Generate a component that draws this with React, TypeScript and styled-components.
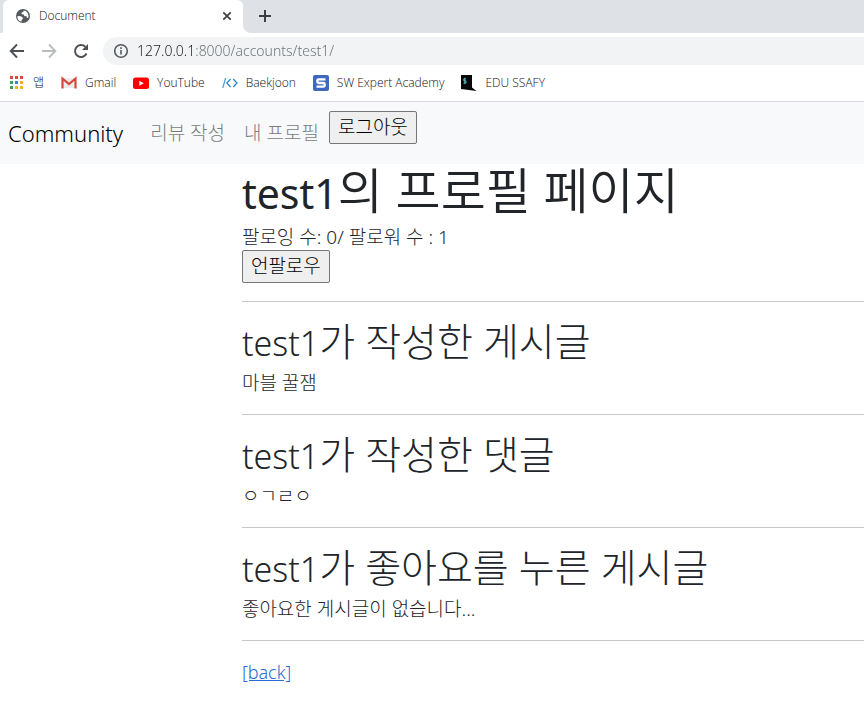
import React from "react";
import styled, { createGlobalStyle } from "styled-components";

const GlobalStyle = createGlobalStyle`
  * { box-sizing: border-box; }
  body {
    margin: 0;
    background: #fff;
    color: #212529;
    font-family: "Noto Sans", "Noto Sans CJK KR", sans-serif;
    font-weight: 300;
    font-size: 19px;
    line-height: 26px;
  }
  button { font: inherit; }
`;

/* ---------- browser frame ---------- */

const Browser = styled.header`
  border-bottom: 1px solid #d5d7da;
  font-family: "Open Sans", "Noto Sans CJK KR", sans-serif;
  font-weight: 300;
  font-size: 12px;
  line-height: 16px;
  color: #101214;
`;

const TabStrip = styled.div`
  display: flex;
  height: 33px;
  padding-left: 3px;
  background: #dee1e6;
`;

const Tab = styled.div`
  display: flex;
  align-items: center;
  gap: 8px;
  flex: 0 1 240px;
  padding: 0 8px 2px 12px;
  border-radius: 6px 6px 0 0;
  background: #fff;
`;

const TabTitle = styled.span`
  flex: 1;
`;

const IconButton = styled.button`
  display: flex;
  align-items: center;
  justify-content: center;
  width: 16px;
  height: 16px;
  padding: 0;
  border: 0;
  background: none;
`;

const StripRest = styled.div`
  flex: 1;
  background: #fff;
`;

const StripFill = styled.div`
  display: flex;
  align-items: center;
  height: 100%;
  padding: 0 0 2px 14px;
  border-bottom-left-radius: 8px;
  background: #dee1e6;
`;

const Toolbar = styled.div`
  display: flex;
  align-items: center;
  gap: 16px;
  height: 36px;
  padding-left: 9px;
`;

const AddressBar = styled.label`
  display: flex;
  align-items: center;
  gap: 8px;
  flex: 1;
  height: 28px;
  margin-left: -2px;
  padding-left: 10px;
  border-radius: 14px 0 0 14px;
  background: #f1f3f4;
`;

const AddressInput = styled.input`
  flex: 1;
  min-width: 0;
  padding: 0;
  border: 0;
  outline: 0;
  background: linear-gradient(to right, #202124 58px, #6b6f73 58px);
  -webkit-background-clip: text;
  background-clip: text;
  color: transparent;
  font-family: "Noto Sans", sans-serif;
  font-weight: 300;
  font-size: 14px;
  line-height: 20px;
`;

const Bookmarks = styled.nav`
  display: flex;
  align-items: center;
  gap: 17px;
  height: 32px;
  padding: 0 0 4px 9px;
`;

const Bookmark = styled.a`
  display: flex;
  align-items: center;
  gap: 8px;
  color: inherit;
  text-decoration: none;
  white-space: nowrap;
`;

/* ---------- site ---------- */

const Navbar = styled.nav`
  display: flex;
  align-items: center;
  padding: 9px 8px;
  background: #f8f9fa;
`;

const Brand = styled.a`
  margin-right: 18px;
  color: #000;
  font-size: 22px;
  font-weight: 300;
  text-decoration: none;
`;

const NavItems = styled.div`
  display: flex;
  align-items: flex-start;
`;

const NavLink = styled.a`
  padding: 9px 10px 9px 9px;
  color: #7b7d80;
  text-decoration: none;
`;

const Button = styled.button`
  padding: 3px 8px;
  border: 1px solid #767676;
  border-radius: 2px;
  background: #efefef;
  color: #000;
  line-height: 25px;
`;

const Profile = styled.main`
  padding-left: 28%;
`;

const Title = styled.h1`
  margin: 0 0 8px;
  font-size: 49px;
  font-weight: 350;
  line-height: 52px;
`;

const SectionTitle = styled.h2`
  margin: 0 0 8px;
  font-size: 39px;
  font-weight: 300;
  line-height: 42px;
`;

const UserName = styled.span<{ $size: number; $weight: number }>`
  font-size: ${(p) => p.$size}px;
  font-weight: ${(p) => p.$weight};
  line-height: 1;
`;

const Text = styled.p`
  margin: 0;
`;

const Rule = styled.hr`
  height: 1px;
  margin: 18px 0;
  border: 0;
  background: #c8c9ca;
`;

const BackLink = styled.a`
  color: #2a6bd4;
  font-size: 18px;
`;

/* ---------- icons ---------- */

const Globe = () => (
  <svg width="16" height="16" viewBox="0 0 16 16">
    <circle cx="8" cy="8" r="7" fill="#55595e" />
    <path d="M2.300 8.200 5 8l2.600 1.200.3 1.800-1.400.9.1 1.900C3.800 13.200 2.300 11 2.300 8.200ZM8.700 2.400 8.300 4 6.500 4.600 6.700 6.300 8.800 6.500 9.400 8.200 11.300 8 12 10l1.300-.4c.9-3.400-1.100-6.700-4.600-7.200Z" fill="#fff" />
  </svg>
);

const Close = () => (
  <svg width="10" height="10" viewBox="0 0 10 10" stroke="#3c4043" strokeWidth="1.7">
    <path d="m1.300 1.300 7.400 7.400m0-7.400L1.300 8.700" />
  </svg>
);

const Plus = () => (
  <svg width="14" height="14" viewBox="0 0 14 14" stroke="#3c4043" strokeWidth="2">
    <path d="M7 1v12M1 7h12" />
  </svg>
);

const Arrow = ({ forward = false }: { forward?: boolean }) => (
  <svg width="16" height="16" viewBox="0 0 16 16" fill="none" stroke={forward ? "#b9bbbe" : "#4d5156"} strokeWidth="1.9">
    <path d={forward ? "M1 8h13M8 1.500 14.300 8 8 14.500" : "M15 8H2M8 1.500 1.700 8 8 14.500"} />
  </svg>
);

const Reload = () => (
  <svg width="16" height="16" viewBox="0 0 16 16">
    <path d="M13.500 10.500A6 6 0 1 1 12.300 3.800" fill="none" stroke="#4d5156" strokeWidth="2" />
    <path d="M15 1v6H9Z" fill="#4d5156" />
  </svg>
);

const Info = () => (
  <svg width="16" height="16" viewBox="0 0 16 16" fill="none" stroke="#55595e" strokeWidth="1.6">
    <circle cx="8" cy="8" r="6.300" />
    <path d="M8 7v4.500M8 4.300v1.700" />
  </svg>
);

const gridColors = ["#d9493c", "#d9493c", "#d9493c", "#3f9d58", "#3c7fe0", "#e9b22e", "#3f9d58", "#e9b22e", "#e9b22e"];

const AppsGrid = () => (
  <svg width="16" height="16" viewBox="0 0 16 16">
    {gridColors.map((color, i) => (
      <rect key={i} x={1 + (i % 3) * 5} y={1 + Math.floor(i / 3) * 5} width="3" height="3" fill={color} />
    ))}
  </svg>
);

const GmailLogo = () => (
  <svg width="16" height="16" viewBox="0 0 16 16">
    <path d="M2 3h12v10H2Z" fill="#eceaea" />
    <path d="M1.500 13.500V3.500L8 9l6.500-5.500v10" fill="none" stroke="#d5483d" strokeWidth="2.200" />
  </svg>
);

const YouTubeLogo = () => (
  <svg width="16" height="16" viewBox="0 0 16 16">
    <rect x="0" y="2.500" width="16" height="11.500" rx="2.500" fill="#f00" />
    <path d="m6.300 5.700 4.500 2.500-4.500 2.500Z" fill="#fff" />
  </svg>
);

const BaekjoonLogo = () => (
  <svg width="16" height="16" viewBox="0 0 16 16" fill="none" strokeWidth="1.200">
    <path d="M3.600 3 .8 13" stroke="#4d9ad0" />
    <path d="M8.600 4 4.800 8l3.800 4M11.300 4 15 8l-3.700 4" stroke="#2584c6" />
  </svg>
);

const SwExpertLogo = () => (
  <svg width="16" height="16" viewBox="0 0 16 16">
    <rect width="16" height="16" rx="2" fill="#3d68bd" />
    <path d="M12.500 4.300H5.800Q4.300 4.300 4.300 6.100T5.800 8h4.400q1.500 0 1.500 1.900t-1.500 1.800H3.500" fill="none" stroke="#fff" strokeWidth="2.300" />
  </svg>
);

const SsafyLogo = () => (
  <svg width="16" height="16" viewBox="0 0 16 16">
    <path d="M0 0h11v12.500L15.500 16 0 14Z" fill="#050708" />
    <path d="M5 3.800H2.800v2H5v2.200H2.500M3.800 2.800v6.200" fill="none" stroke="#65c3d2" strokeWidth=".9" />
  </svg>
);

const bookmarks = [
  { label: "앱", icon: <AppsGrid /> },
  { label: "Gmail", icon: <GmailLogo /> },
  { label: "YouTube", icon: <YouTubeLogo /> },
  { label: "Baekjoon", icon: <BaekjoonLogo /> },
  { label: "SW Expert Academy", icon: <SwExpertLogo /> },
  { label: "EDU SSAFY", icon: <SsafyLogo /> },
];

const sections = [
  { title: "가 작성한 게시글", body: "마블 꿀잼" },
  { title: "가 작성한 댓글", body: "ㅇㄱㄹㅇ" },
  { title: "가 좋아요를 누른 게시글", body: "좋아요한 게시글이 없습니다..." },
];

export default function App() {
  return (
    <>
      <GlobalStyle />
      <Browser>
        <TabStrip>
          <Tab>
            <Globe />
            <TabTitle>Document</TabTitle>
            <IconButton aria-label="Close tab"><Close /></IconButton>
          </Tab>
          <StripRest>
            <StripFill>
              <IconButton aria-label="New tab"><Plus /></IconButton>
            </StripFill>
          </StripRest>
        </TabStrip>
        <Toolbar>
          <IconButton aria-label="Back"><Arrow /></IconButton>
          <IconButton aria-label="Forward" disabled><Arrow forward /></IconButton>
          <IconButton aria-label="Reload"><Reload /></IconButton>
          <AddressBar>
            <Info />
            <AddressInput aria-label="Address" defaultValue="127.0.0.1:8000/accounts/test1/" />
          </AddressBar>
        </Toolbar>
        <Bookmarks>
          {bookmarks.map((b) => (
            <Bookmark key={b.label} href="#">{b.icon}{b.label}</Bookmark>
          ))}
        </Bookmarks>
      </Browser>
      <Navbar>
        <Brand href="#">Community</Brand>
        <NavItems>
          <NavLink href="#">리뷰 작성</NavLink>
          <NavLink href="#">내 프로필</NavLink>
          <Button>로그아웃</Button>
        </NavItems>
      </Navbar>
      <Profile>
        <Title><UserName $size={41} $weight={400}>test1</UserName>의 프로필 페이지</Title>
        <Text>팔로잉 수: 0/ 팔로워 수 : 1</Text>
        <Button>언팔로우</Button>
        <Rule />
        {sections.map((s) => (
          <section key={s.title}>
            <SectionTitle><UserName $size={34} $weight={300}>test1</UserName>{s.title}</SectionTitle>
            <Text>{s.body}</Text>
            <Rule />
          </section>
        ))}
        <BackLink href="#">[back]</BackLink>
      </Profile>
    </>
  );
}
